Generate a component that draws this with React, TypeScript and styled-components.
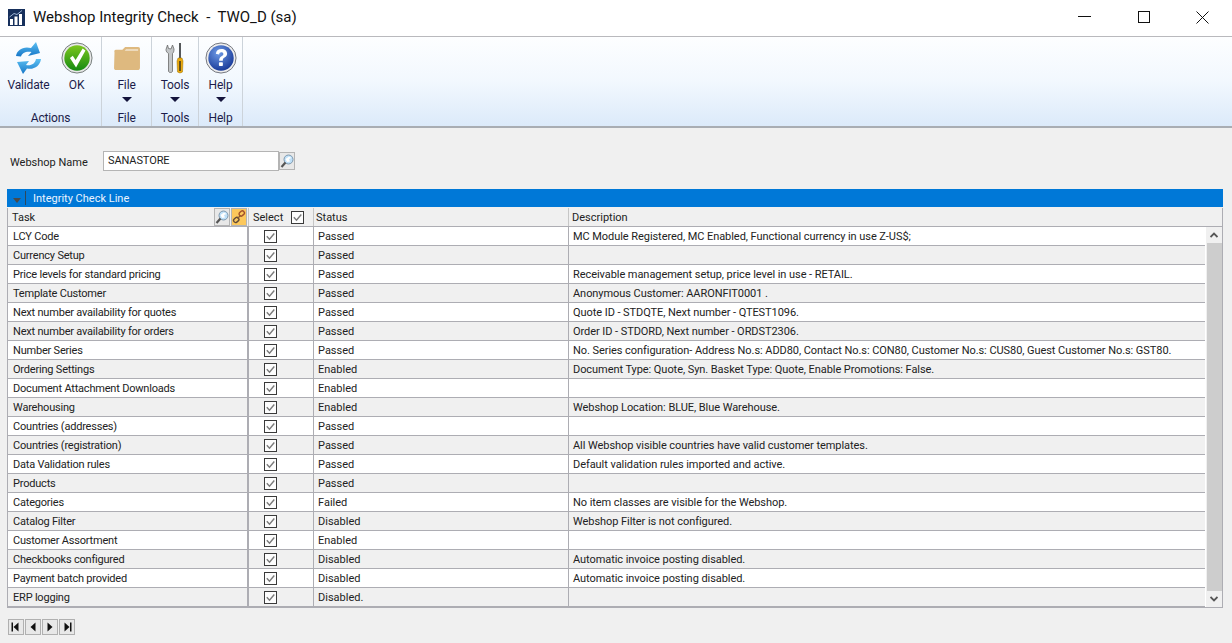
import React from "react";
import styled, { createGlobalStyle } from "styled-components";

const Global = createGlobalStyle`
  html, body { margin: 0; padding: 0; width: 1232px; height: 643px; overflow: hidden; background: #f0f0f0; }
  * { box-sizing: border-box; }
  body { font-family: Roboto, "Open Sans", sans-serif; color: #222; }
`;

const Page = styled.div`
  width: 1232px; height: 643px; display: flex; flex-direction: column; background: #f0f0f0;
`;
const TitleBar = styled.header`
  height: 37px; background: #fff; border-bottom: 1px solid #b9b9bd; display: flex; align-items: center; padding: 0 0 2px 8px; flex: none;
`;
const TitleText = styled.div`
  margin-left: 8px; font-size: 15px; color: #111; white-space: pre; flex: 1;
`;
const WinButton = styled.div`
  width: 59px; display: flex; justify-content: center; align-items: center; height: 34px;
`;
const Ribbon = styled.div`
  height: 91px; flex: none; display: flex; border-bottom: 2px solid #a9adb3;
  background: linear-gradient(#fdfeff 0%, #f2f8fe 50%, #dceafa 100%);
`;
const Group = styled.section<{ $w: number }>`
  width: ${p => p.$w}px; border-right: 1px solid #ccd3da; display: flex; flex-direction: column; align-items: center; flex: none;
`;
const GroupItems = styled.div<{ $shift?: number }>`
  display: flex; flex: 1; justify-content: center; gap: 9px; padding-top: 3px; padding-left: ${p => p.$shift || 0}px;
`;
const Tool = styled.div`
  display: flex; flex-direction: column; align-items: center; font-size: 12px; letter-spacing: -0.15px; color: #1c1c4a;
`;
const ToolIcon = styled.div`
  width: 36px; height: 36px; display: flex; align-items: center; justify-content: center; margin-bottom: 1px;
`;
const ToolLabel = styled.div`line-height: 16px;`;
const Caret = styled.div`
  width: 0; height: 0; border-left: 5px solid transparent; border-right: 5px solid transparent; border-top: 5px solid #14143c; margin-top: 4px;
`;
const GroupLabel = styled.div`
  font-size: 12px; letter-spacing: -0.15px; color: #1c1c4a; height: 18px; line-height: 20px; flex: none;
`;
const Form = styled.div`
  display: flex; align-items: center; height: 22px; margin: 22px 0 0 10px; font-size: 11px; flex: none;
`;
const FieldLabel = styled.label`width: 93px; color: #222; padding-top: 2px;`;
const NameInput = styled.div`
  width: 176px; height: 20px; background: #fff; border: 1px solid #b4b4b4; padding-left: 4px; font-size: 11px; letter-spacing: -0.1px; line-height: 17px; color: #222;
`;
const LookupBtn = styled.div<{ $bg?: string }>`
  width: 16px; height: 18px; background: ${p => p.$bg || "#e8e8e8"}; border: 1px solid #b4b4b4; display: flex; align-items: center; justify-content: center; flex: none;
`;
const Panel = styled.section`
  margin: 17px 9px 0 7px; flex: none;
`;
const PanelHead = styled.div`
  height: 18px; background: #0078d7; display: flex; align-items: center; color: #eaf4ff; font-size: 11px;
`;
const HeadArrow = styled.div`
  width: 0; height: 0; margin: 4px 0 0 6px; border-left: 4.5px solid transparent; border-right: 4.5px solid transparent; border-top: 5px solid #4a4a4a;
`;
const HeadSep = styled.div`
  width: 1px; height: 14px; margin: 0 7px 0 4px; background: #3b3b3b; opacity: .8;
`;
const GridBox = styled.div`
  border: 1px solid #adadb3; border-top: 0; height: 400px; background: #f0f0f0; display: flex; flex-direction: column; margin-top: 1px;
`;
const Columns = `grid-template-columns: 241px 65px 255px 1fr;`;
const HeaderRow = styled.div`
  display: grid; ${Columns} height: 19px; border-bottom: 1px solid #adadb3; font-size: 11px; color: #222; flex: none; align-items: center;
`;
const HeadCell = styled.div<{ $pad?: number }>`
  display: flex; align-items: center; height: 18px; padding-left: ${p => p.$pad ?? 4}px; gap: 8px; border-right: 1px solid #c6c6c6;
  &:last-child { border-right: 0; }
`;
const HeadSpacer = styled.div`flex: 1;`;
const HeadTools = styled.div`display: flex; gap: 1px; margin-right: 1px;`;
const Body = styled.div`display: flex; flex: 1; min-height: 0;`;
const Rows = styled.div`flex: 1; min-width: 0;`;
const Row = styled.div<{ $alt: boolean }>`
  display: grid; ${Columns.replace("1fr", "636px")} height: 19px; border-bottom: 1px solid #adadb3;
  background: ${p => (p.$alt ? "#f0f0f0" : "#fff")}; font-size: 11px; color: #222;
`;
const TaskCell = styled.div`
  padding-left: 5px; line-height: 20px; letter-spacing: -0.2px; border-right: 2px solid #adadb3; white-space: nowrap; overflow: hidden;
`;
const SelectCell = styled.div`
  display: flex; padding-left: 15px; align-items: center; border-right: 1px solid #adadb3;
`;
const StatusCell = styled.div`
  padding-left: 4px; line-height: 20px; border-right: 1px solid #adadb3; white-space: nowrap; overflow: hidden;
`;
const DescCell = styled.div`
  padding-left: 4px; line-height: 20px; letter-spacing: -0.06px; white-space: nowrap; overflow: hidden;
`;
const Scrollbar = styled.div`
  width: 17px; flex: none; background: #f0f0f0; border-left: 1px solid #fff; display: flex; flex-direction: column; align-items: center;
`;
const ScrollBtn = styled.div`height: 16px; flex: none; display: flex; align-items: center; justify-content: center;`;
const Thumb = styled.div`width: 15px; flex: 1; background: #cdcdcd;`;
const Pager = styled.nav`display: flex; gap: 1px; margin: 11px 0 0 8px; flex: none;`;
const PageBtn = styled.div`
  width: 16px; height: 16px; border: 1px solid #b0b0b0; background: #e8e8e8; display: flex; align-items: center; justify-content: center;
`;

const Check = ({ size = 13 }: { size?: number }) => (
  <svg width={size} height={size} viewBox="0 0 13 13" style={{ display: "block" }}>
    <rect x=".5" y=".5" width="12" height="12" fill="#fdfdfd" stroke="#3a3a3a" />
    <path d="M2.800 6.300 L5.500 9.200 L10.300 3.500" fill="none" stroke="#7a7a7a" strokeWidth="1.400" />
  </svg>
);
const Lens = () => (
  <svg width="14" height="15" viewBox="0 0 14 15">
    <circle cx="8.500" cy="5.500" r="4.500" fill="#bfe0f8" stroke="#7f98ad" strokeWidth="1" />
    <path d="M5.500 5 L9 2.500 L11.500 4 L9 5 L10 7.500 L7 8z" fill="#fff" />
    <path d="M5.500 8.500 L1.500 13" stroke="#555" strokeWidth="2.200" />
  </svg>
);
const Link = () => (
  <svg width="14" height="14" viewBox="0 0 14 14">
    <rect x="7" y="1.500" width="5.500" height="4" rx="1.800" transform="rotate(-40 9.700 3.500)" fill="none" stroke="#a3502a" strokeWidth="1.400" />
    <rect x="1.500" y="8" width="5.500" height="4" rx="1.800" transform="rotate(-40 4.200 10)" fill="none" stroke="#5f4a3a" strokeWidth="1.400" />
    <path d="M5.500 8.500 L8.500 5.500" stroke="#8a5a30" strokeWidth="1.200" />
  </svg>
);
const Validate = () => (
  <svg width="28" height="34" viewBox="0 0 28 34">
    <defs><linearGradient id="vg" x1="0" y1="0" x2="0" y2="1"><stop offset="0" stopColor="#5cc0f2" /><stop offset="1" stopColor="#1777c8" /></linearGradient></defs>
    <path d="M1 15 C2 9 8 5 16 7 L21 1 L25 12 L13 15 L16.500 11 C11 10 7 12 6 15.500z" fill="url(#vg)" />
    <path d="M26 18 C25 25 19 29 12 27.500 L8 33 L2 21 L14 20 L11 24 C16 25 20 23 21 18z" fill="url(#vg)" />
  </svg>
);
const Ok = () => (
  <svg width="32" height="32" viewBox="0 0 34 34">
    <defs><linearGradient id="og" x1="0" y1="0" x2="0" y2="1"><stop offset="0" stopColor="#7dc71e" /><stop offset="1" stopColor="#158a12" /></linearGradient></defs>
    <circle cx="17" cy="17" r="16" fill="#e8e8e8" stroke="#6f7775" strokeWidth="1" />
    <circle cx="17" cy="17" r="13.500" fill="url(#og)" />
    <path d="M9.500 17 L12.500 14.500 L15.500 19 L23 7 L26 9 L16 27 z" fill="#fff" />
  </svg>
);
const Folder = () => (
  <svg width="28" height="25" viewBox="0 0 30 27">
    <path d="M1.500 7 C1 5.500 1.500 4 3 4 L10 4 L13 1 L27 1 C28.500 1 29 2 29 3 L29 23.500 C29 25 28 26 26.500 26 L3 26 C2 26 1 25 1 24z" fill="#deb97f" />
    <path d="M14 3.500 L27 3.500 L27 5 L12.500 5z" fill="#f2e6d0" />
  </svg>
);
const Tools = () => (
  <svg width="20" height="31" viewBox="0 0 20 31">
    <path d="M1 6.500 L2.500 2 L3.500 5.500 L6 6 L7.500 2 L9 6 C9 8.500 8.500 9.500 7.500 10.500 L7.500 28 C7.500 30 3.500 30 3.500 28 L3.500 10.500 C2 9.500 1 8.500 1 6.500z" fill="#c3c6c8" stroke="#6a6a6a" strokeWidth=".8" />
    <rect x="14" y="0" width="2" height="15" fill="#55585a" />
    <path d="M13 15 L17 15 L18 18 L17.500 29 Q15 31 12.500 29 L12 18z" fill="#eba90d" stroke="#9a7306" strokeWidth=".5" />
    <rect x="14.300" y="18" width="1.400" height="10" fill="#2b2b20" />
  </svg>
);
const Help = () => (
  <svg width="32" height="32" viewBox="0 0 34 34">
    <defs><radialGradient id="hg" cx=".4" cy=".3" r=".8"><stop offset="0" stopColor="#6f9be6" /><stop offset="1" stopColor="#0f2f90" /></radialGradient></defs>
    <circle cx="17" cy="17" r="16" fill="#eee" stroke="#6c6f78" strokeWidth="1" />
    <circle cx="17" cy="17" r="13.500" fill="url(#hg)" />
    <path d="M11.500 12.500 C12 9 14.500 7.500 17.500 7.500 C21 7.500 23.500 9.500 23.500 12.500 C23.500 15 21.500 16 20 17 C19 17.700 18.900 18.500 18.900 20 L15 20 C15 17.500 15.800 16.300 17.500 15.200 C18.800 14.300 19.500 13.800 19.500 12.800 C19.500 11.700 18.600 11 17.300 11 C16 11 15.200 11.800 15 13.200z" fill="#fff" />
    <rect x="14.800" y="21.500" width="4.200" height="4" rx=".8" fill="#fff" />
  </svg>
);
const Logo = () => (
  <svg width="17" height="17" viewBox="0 0 17 17">
    <rect width="17" height="17" fill="#17305c" />
    <rect x="2" y="10" width="3" height="6" fill="#fff" />
    <rect x="6.500" y="7.500" width="3" height="8.500" fill="#fff" />
    <rect x="11" y="5" width="3" height="11" fill="#fff" />
    <path d="M1.500 8 L6 4.500 L9 5.500 L14 1.500" fill="none" stroke="#9fb6d6" strokeWidth="1" />
  </svg>
);
const Nav = ({ d, bar }: { d: "l" | "r"; bar?: boolean }) => (
  <svg width="10" height="10" viewBox="0 0 10 10">
    {d === "l" ? <path d="M7.500 0.500 L7.500 9.500 L2.500 5z" fill="#111" /> : <path d="M2.500 0.500 L2.500 9.500 L7.500 5z" fill="#111" />}
    {bar && <rect x={d === "l" ? 0.5 : 8} y=".5" width="1.500" height="9" fill="#111" />}
  </svg>
);
const Chevron = ({ up }: { up?: boolean }) => (
  <svg width="8" height="6" viewBox="0 0 8 6">
    <path d={up ? "M.5 5 L4 1.500 L7.500 5" : "M.5 1 L4 4.500 L7.500 1"} fill="none" stroke="#555" strokeWidth="1.800" />
  </svg>
);

const data: [string, string, string][] = [
  ["LCY Code", "Passed", "MC Module Registered, MC Enabled, Functional currency in use Z-US$;"],
  ["Currency Setup", "Passed", ""],
  ["Price levels for standard pricing", "Passed", "Receivable management setup, price level in use - RETAIL."],
  ["Template Customer", "Passed", "Anonymous Customer: AARONFIT0001 ."],
  ["Next number availability for quotes", "Passed", "Quote ID - STDQTE, Next number - QTEST1096."],
  ["Next number availability for orders", "Passed", "Order ID - STDORD, Next number - ORDST2306."],
  ["Number Series", "Passed", "No. Series configuration- Address No.s: ADD80, Contact No.s: CON80, Customer No.s: CUS80, Guest Customer No.s: GST80."],
  ["Ordering Settings", "Enabled", "Document Type: Quote, Syn. Basket Type: Quote, Enable Promotions: False."],
  ["Document Attachment Downloads", "Enabled", ""],
  ["Warehousing", "Enabled", "Webshop Location: BLUE, Blue Warehouse."],
  ["Countries (addresses)", "Passed", ""],
  ["Countries (registration)", "Passed", "All Webshop visible countries have valid customer templates."],
  ["Data Validation rules", "Passed", "Default validation rules imported and active."],
  ["Products", "Passed", ""],
  ["Categories", "Failed", "No item classes are visible for the Webshop."],
  ["Catalog Filter", "Disabled", "Webshop Filter is not configured."],
  ["Customer Assortment", "Enabled", ""],
  ["Checkbooks configured", "Disabled", "Automatic invoice posting disabled."],
  ["Payment batch provided", "Disabled", "Automatic invoice posting disabled."],
  ["ERP logging", "Disabled.", ""],
];

export default function App() {
  return (
    <Page>
      <Global />
      <TitleBar>
        <Logo />
        <TitleText>{"Webshop Integrity Check  -  TWO_D (sa)"}</TitleText>
        <WinButton><svg width="13" height="2"><rect width="13" height="1" fill="#111" /></svg></WinButton>
        <WinButton><svg width="12" height="12"><rect x=".5" y=".5" width="11" height="11" fill="none" stroke="#111" /></svg></WinButton>
        <WinButton><svg width="13" height="13"><path d="M.5.5 L12.500 12.500 M12.500.5 L.5 12.500" stroke="#111" /></svg></WinButton>
      </TitleBar>
      <Ribbon>
        <Group $w={102}>
          <GroupItems $shift={1}>
            <Tool><ToolIcon><Validate /></ToolIcon><ToolLabel>Validate</ToolLabel></Tool>
            <Tool><ToolIcon><Ok /></ToolIcon><ToolLabel>OK</ToolLabel></Tool>
          </GroupItems>
          <GroupLabel>Actions</GroupLabel>
        </Group>
        <Group $w={50}>
          <GroupItems>
            <Tool><ToolIcon><Folder /></ToolIcon><ToolLabel>File</ToolLabel><Caret /></Tool>
          </GroupItems>
          <GroupLabel>File</GroupLabel>
        </Group>
        <Group $w={47}>
          <GroupItems>
            <Tool><ToolIcon><Tools /></ToolIcon><ToolLabel>Tools</ToolLabel><Caret /></Tool>
          </GroupItems>
          <GroupLabel>Tools</GroupLabel>
        </Group>
        <Group $w={44}>
          <GroupItems>
            <Tool><ToolIcon><Help /></ToolIcon><ToolLabel>Help</ToolLabel><Caret /></Tool>
          </GroupItems>
          <GroupLabel>Help</GroupLabel>
        </Group>
      </Ribbon>
      <Form>
        <FieldLabel>Webshop Name</FieldLabel>
        <NameInput>SANASTORE</NameInput>
        <LookupBtn><Lens /></LookupBtn>
      </Form>
      <Panel>
        <PanelHead><HeadArrow /><HeadSep />Integrity Check Line</PanelHead>
        <GridBox>
          <HeaderRow>
            <HeadCell>Task<HeadSpacer /><HeadTools><LookupBtn><Lens /></LookupBtn><LookupBtn $bg="#fcc85c"><Link /></LookupBtn></HeadTools></HeadCell>
            <HeadCell>Select<Check /></HeadCell>
            <HeadCell $pad={2}>Status</HeadCell>
            <HeadCell $pad={3}>Description</HeadCell>
          </HeaderRow>
          <Body>
            <Rows>
              {data.map(([task, status, desc], i) => (
                <Row key={task} $alt={i % 2 === 1}>
                  <TaskCell>{task}</TaskCell>
                  <SelectCell><Check /></SelectCell>
                  <StatusCell>{status}</StatusCell>
                  <DescCell>{desc}</DescCell>
                </Row>
              ))}
            </Rows>
            <Scrollbar>
              <ScrollBtn><Chevron up /></ScrollBtn>
              <Thumb />
              <ScrollBtn><Chevron /></ScrollBtn>
            </Scrollbar>
          </Body>
        </GridBox>
      </Panel>
      <Pager>
        <PageBtn><Nav d="l" bar /></PageBtn>
        <PageBtn><Nav d="l" /></PageBtn>
        <PageBtn><Nav d="r" /></PageBtn>
        <PageBtn><Nav d="r" bar /></PageBtn>
      </Pager>
    </Page>
  );
}
